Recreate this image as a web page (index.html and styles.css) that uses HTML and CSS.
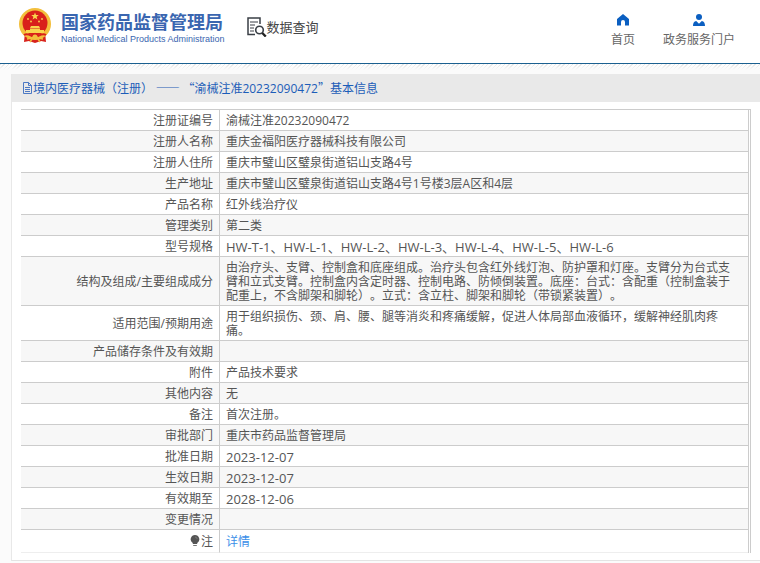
FILE: index.html
```html
<!DOCTYPE html>
<html lang="zh-CN">
<head>
    <meta charset="UTF-8">
    <meta name="viewport" content="width=device-width, initial-scale=1.0">
    <title>数据查询 - 国家药品监督管理局</title>
    <link rel="stylesheet" href="styles.css">
</head>
<body>
    <header class="header">
        <a class="brand" href="#">
            <svg class="emblem" viewBox="0 0 32 36" aria-hidden="true">
                <path d="M6 24 L5 34 L10 33 L16 35 L22 33 L27 34 L26 24 Z" fill="#d8231c"/>
                <circle cx="16" cy="16" r="16" fill="#f3bf3c"/>
                <circle cx="16" cy="15" r="12.5" fill="#d9201b"/>
                <path d="M16 4.500l1 2.600h2.800l-2.200 1.700.8 2.700-2.400-1.600-2.400 1.600.8-2.700-2.200-1.700H15z" fill="#f9d64e"/>
                <g fill="#f9d64e">
                    <circle cx="9" cy="11" r="0.900"/>
                    <circle cx="12" cy="13.500" r="0.900"/>
                    <circle cx="20" cy="13.500" r="0.900"/>
                    <circle cx="23" cy="11" r="0.900"/>
                    <path d="M12 18h8l1 2h-10zM11 20.500h10v1.500h4v3H7v-3h4z"/>
                </g>
                <path d="M5 27c3-2 6 0 8 1l3-2 3 2c2-1 5-3 8-1" fill="none" stroke="#d9201b" stroke-width="2"/>
                <path d="M8 31l5-1 3-2 3 2 5 1M11 34l2-3M21 34l-2-3" fill="none" stroke="#f3bf3c" stroke-width="1.500"/>
                <circle cx="16" cy="29" r="2.500" fill="#f3bf3c"/>
            </svg>
            <span class="brand-text">
                <strong class="brand-cn">国家药品监督管理局</strong>
                <span class="brand-en">National Medical Products Administration</span>
            </span>
        </a>
        <a class="query" href="#">
            <svg class="query-icon" viewBox="0 0 20 20" aria-hidden="true">
                <path d="M8 17.500H1V1h12v6" fill="none" stroke="#3a3f46" stroke-width="1.500"/>
                <path d="M3 5h8M3 8h5M3 11h4M3 14h4" stroke="#3a3f46" stroke-width="1.200"/>
                <circle cx="12.500" cy="13" r="3.800" fill="#fff" stroke="#3a3f46" stroke-width="1.600"/>
                <path d="M15.300 16l3.500 3.500" stroke="#222" stroke-width="2.400"/>
            </svg>
            数据查询
        </a>
        <nav class="nav">
            <a class="nav-item" href="#">
                <svg class="nav-icon" viewBox="0 0 12 12" aria-hidden="true">
                    <path d="M6 0L0 5v6.500h4V8a2 2 0 0 1 4 0v3.500h4V5z" fill="#0b5fc1"/>
                </svg>
                首页
            </a>
            <a class="nav-item" href="#">
                <svg class="nav-icon" viewBox="0 0 12 12" aria-hidden="true">
                    <circle cx="6" cy="3" r="3" fill="#0b5fc1"/>
                    <path d="M0 12c0-3 1-4.500 3.200-5L6 9.800 8.800 7C11 7.500 12 9 12 12z" fill="#0b5fc1"/>
                </svg>
                政务服务门户
            </a>
        </nav>
    </header>

    <main class="card">
        <h1 class="card-title">
            <svg class="doc-icon" viewBox="0 0 11 12" aria-hidden="true">
                <path d="M1.500.5h5l3 3v8h-8zM6.500.5v3h3M3 5.500h5M3 7.500h5M3 9.500h5" fill="none" stroke="#3a6cc0" stroke-width="0.900"/>
            </svg>
            <span>境内医疗器械（注册） —— “渝械注准<span class="num">20232090472</span>”基本信息</span>
        </h1>
        <div class="card-body">
            <table class="info">
                <tr><th scope="row">注册证编号</th><td>渝械注准20232090472</td></tr>
                <tr><th scope="row">注册人名称</th><td>重庆金福阳医疗器械科技有限公司</td></tr>
                <tr><th scope="row">注册人住所</th><td>重庆市璧山区璧泉街道铝山支路4号</td></tr>
                <tr><th scope="row">生产地址</th><td>重庆市璧山区璧泉街道铝山支路4号1号楼3层A区和4层</td></tr>
                <tr><th scope="row">产品名称</th><td>红外线治疗仪</td></tr>
                <tr><th scope="row">管理类别</th><td>第二类</td></tr>
                <tr><th scope="row">型号规格</th><td class="code">HW-T-1、HW-L-1、HW-L-2、HW-L-3、HW-L-4、HW-L-5、HW-L-6</td></tr>
                <tr><th scope="row">结构及组成/主要组成成分</th><td>由治疗头、支臂、控制盒和底座组成。治疗头包含红外线灯泡、防护罩和灯座。支臂分为台式支臂和立式支臂。控制盒内含定时器、控制电路、防倾倒装置。底座：台式：含配重（控制盒装于配重上，不含脚架和脚轮）。立式：含立柱、脚架和脚轮（带锁紧装置）。</td></tr>
                <tr><th scope="row">适用范围/预期用途</th><td>用于组织损伤、颈、肩、腰、腿等消炎和疼痛缓解，促进人体局部血液循环，缓解神经肌肉疼痛。</td></tr>
                <tr><th scope="row">产品储存条件及有效期</th><td></td></tr>
                <tr><th scope="row">附件</th><td>产品技术要求</td></tr>
                <tr><th scope="row">其他内容</th><td>无</td></tr>
                <tr><th scope="row">备注</th><td>首次注册。</td></tr>
                <tr><th scope="row">审批部门</th><td>重庆市药品监督管理局</td></tr>
                <tr><th scope="row">批准日期</th><td class="code">2023-12-07</td></tr>
                <tr><th scope="row">生效日期</th><td class="code">2023-12-07</td></tr>
                <tr><th scope="row">有效期至</th><td class="code">2028-12-06</td></tr>
                <tr><th scope="row">变更情况</th><td></td></tr>
                <tr class="note">
                    <th scope="row">
                        <svg class="bulb" viewBox="0 0 10 12" aria-hidden="true">
                            <path d="M5 0a4.300 4.300 0 0 1 2.500 7.800L7 9H3l-.5-1.200A4.300 4.300 0 0 1 5 0z" fill="#555"/>
                            <path d="M3.200 10.500h3.600M5 2a2.300 2.300 0 0 1 2.200 2" fill="none" stroke="#777" stroke-width="1"/>
                        </svg>注</th>
                    <td><a class="detail" href="#">详情</a></td>
                </tr>
            </table>
        </div>
    </main>
</body>
</html>
```

FILE: styles.css
```css
* {
    box-sizing: border-box;
}

html {
    background: #fbfbfb;
}

body {
    margin: 0;
    font-family: "Open Sans", "Noto Sans CJK SC", sans-serif;
    font-size: 12px;
    line-height: 14px;
    text-spacing-trim: space-all;
    color: #555;
    background: linear-gradient(rgba(251, 251, 251, 0) 62px, #fbfbfb 70px),
        repeating-linear-gradient(135deg, #ddd 0, #ddd 1px, #fff 1px, #fff 3px);
}

a {
    color: inherit;
    text-decoration: none;
}

.header {
    display: flex;
    align-items: flex-start;
    height: 64px;
    padding: 8px 25px 0 19px;
    background: #fff;
    border-bottom: 1px solid #1b6090;
}

.brand {
    display: flex;
    gap: 10px;
    color: #3a66b0;
}

.emblem {
    width: 32px;
    height: 36px;
}

.brand-text {
    display: flex;
    flex-direction: column;
    padding-top: 4px;
}

.brand-cn {
    font-size: 18px;
    line-height: 20px;
}

.brand-en {
    font-family: "Liberation Sans", Arial, sans-serif;
    font-size: 9px;
    line-height: 14px;
    white-space: nowrap;
}

.query {
    display: flex;
    align-items: center;
    margin: 9px 0 0 22px;
    font-size: 13px;
    line-height: 20px;
    color: #444;
}

.query-icon {
    width: 20px;
    height: 20px;
}

.nav {
    display: flex;
    gap: 28px;
    margin-left: auto;
    padding-top: 6px;
}

.nav-item {
    display: flex;
    flex-direction: column;
    align-items: center;
    gap: 7px;
    color: #666;
}

.nav-icon {
    width: 12px;
    height: 12px;
}

.card {
    margin: 10px 0 2px 11px;
    background: #fff;
    border-left: 1px solid #e8e8e8;
    border-bottom: 1px solid #e4e4e4;
}

.card-title {
    display: flex;
    align-items: center;
    height: 28px;
    margin: 0;
    padding-left: 10px;
    font-family: "Noto Sans CJK SC", sans-serif;
    font-size: 12px;
    font-weight: normal;
    color: #1c5db8;
    background: #e9e9e9;
}

.num {
    font-family: "Open Sans", sans-serif;
}

.doc-icon {
    width: 11px;
    height: 12px;
}

.card-body {
    padding: 7px 9px;
}

.info {
    width: 100%;
    border-collapse: separate;
    border-spacing: 0;
    border-top: 1px solid #ccc;
    border-right: 3px double #ccc;
}

.info th,
.info td {
    height: 21px;
    padding: 4px 12px 2px 6px;
    border-bottom: 1px solid #ccc;
    font-weight: normal;
}

.info th {
    width: 199px;
    padding-right: 6px;
    border-right: 1px solid #ccc;
    text-align: right;
}

.info .code {
    font-size: 13px;
}

.info tr:nth-child(even) {
    background: #f7f7f7;
}

.info .note th,
.info .note td {
    height: 23px;
    border-bottom-color: #eee;
}

.bulb {
    width: 10px;
    height: 12px;
    margin-right: 1px;
    vertical-align: -1px;
}

.detail {
    color: #3c8fe8;
}
```
